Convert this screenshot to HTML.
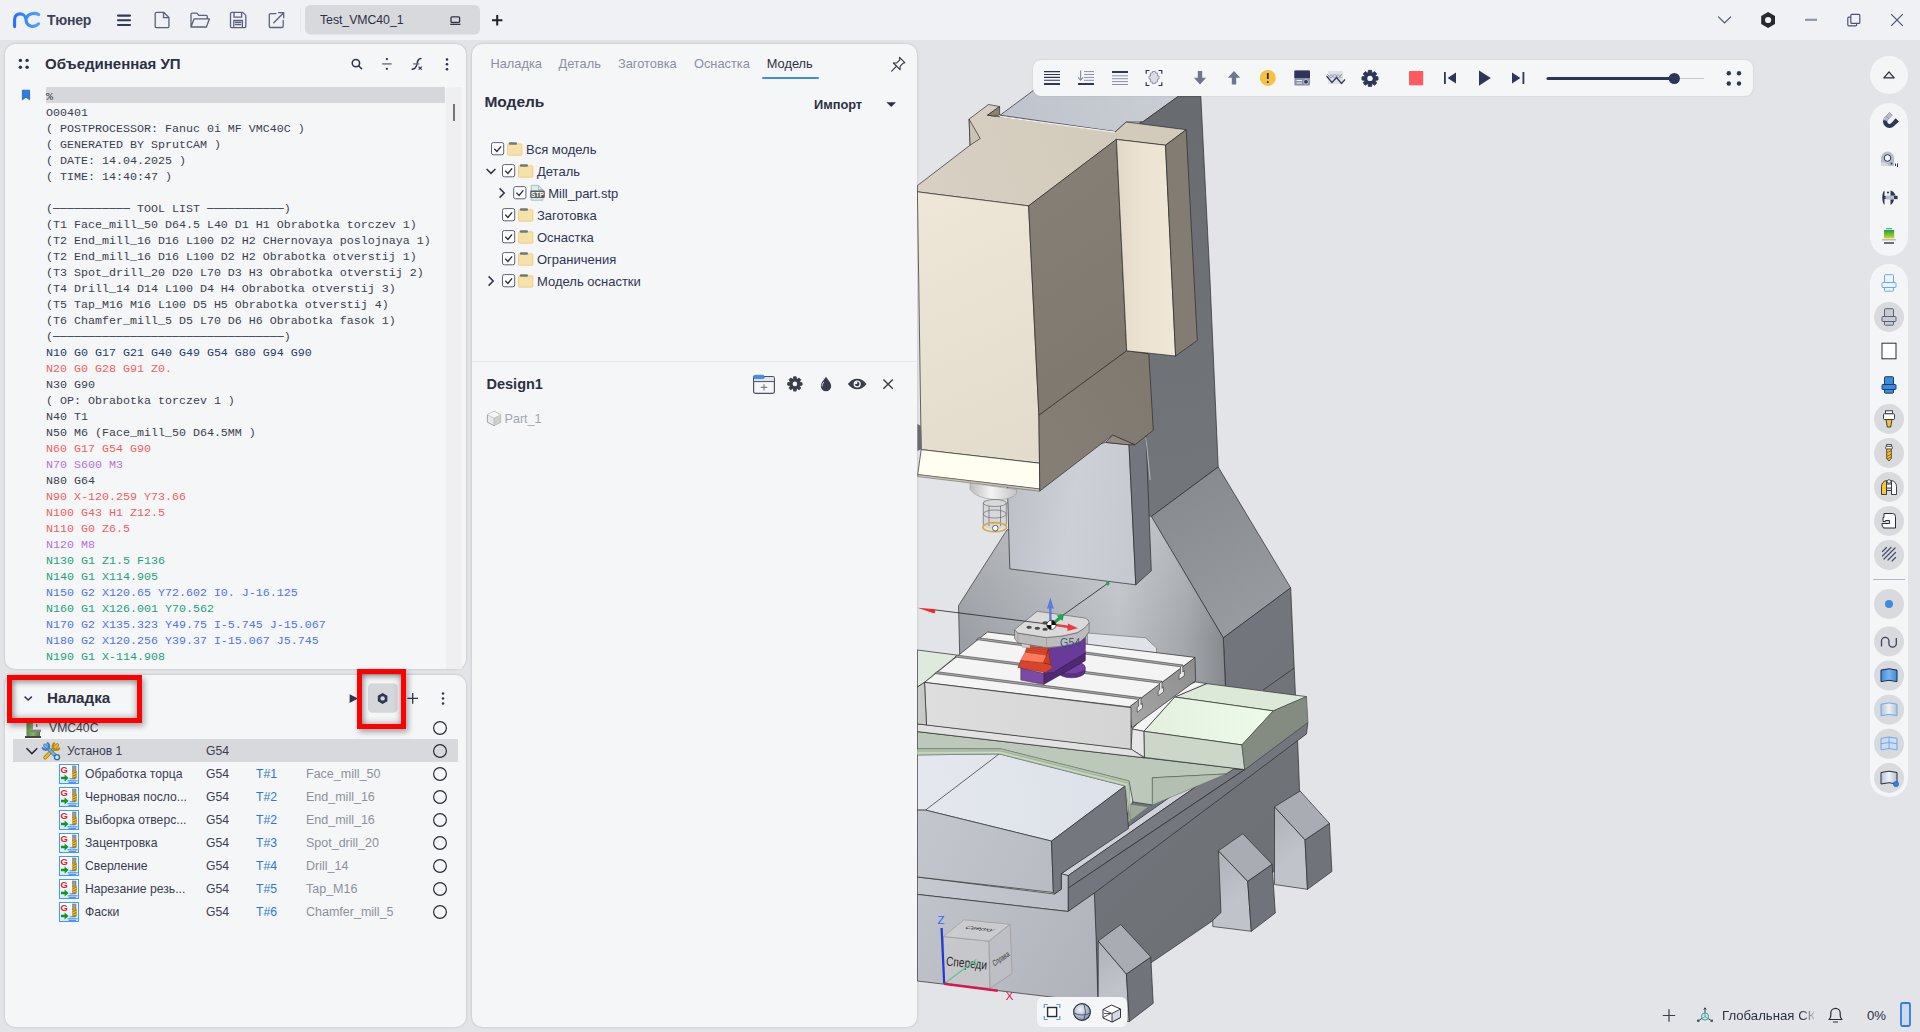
<!DOCTYPE html>
<html lang="ru">
<head>
<meta charset="utf-8">
<title>Тюнер</title>
<style>
*{box-sizing:border-box;margin:0;padding:0}
html,body{width:1920px;height:1032px;overflow:hidden}
body{background:#e3e4e8;font-family:"Liberation Sans",sans-serif;color:#2b3044;position:relative;font-size:13px}
.abs{position:absolute}
#topbar{position:absolute;left:0;top:0;width:1920px;height:40px;background:#f0f1f5}
.panel{position:absolute;background:#f5f6f8;border-radius:10px;box-shadow:0 0 2.5px rgba(0,0,0,.2)}
#p1{left:5px;top:44.4px;width:461px;height:625px}
#p2{left:5px;top:675px;width:461px;height:352px}
#p3{left:472px;top:44.4px;width:445px;height:982.6px}
#view{position:absolute;left:917px;top:40px;width:1003px;height:992px;overflow:hidden}
.t{position:absolute;white-space:pre;line-height:1}
#code{position:absolute;left:46px;top:88.5px;font-family:"Liberation Mono",monospace;font-size:11.67px;line-height:16px;color:#3a3f4f}
#code div{height:16px;white-space:pre}
.c0{color:#3a3f4f}.cb{color:#1f3a6b}.cr{color:#f0605f}.cp{color:#b86fe0}.cg{color:#1aa37a}.cu{color:#4f74e3}
</style>
</head>
<body>
<div id="topbar"></div>
<div class="panel" id="p1"></div>
<div class="panel" id="p2"></div>
<div class="panel" id="p3"></div>
<div id="view"></div>

<svg class="abs" style="left:0;top:0" width="1920" height="40" viewBox="0 0 1920 40" fill="none">
<defs><linearGradient id="lg" x1="13" y1="0" x2="40" y2="0" gradientUnits="userSpaceOnUse"><stop offset="0" stop-color="#2a6cf5"/><stop offset="1" stop-color="#49a8ff"/></linearGradient></defs>
<path d="M14.6 26.6V19.4C14.6 12 25.4 12 26 19.6C26.6 27.6 35 27.8 38.6 23.8" stroke="url(#lg)" stroke-width="3.1" stroke-linecap="round"/><path d="M26.6 17.6C28.2 13.6 34.4 12.200 38.800 14.600" stroke="url(#lg)" stroke-width="3.1" stroke-linecap="round"/>
<g stroke="#333b50" stroke-width="2.1" stroke-linecap="round"><path d="M118 15.6h12M118 20.3h12M118 25h12"/></g>
<g stroke="#5a627a" stroke-width="1.3" stroke-linejoin="round" stroke-linecap="round">
<path d="M156.5 12.3h7.2l5.2 5.2v8.9a1.3 1.3 0 0 1-1.3 1.3h-11.1a1.3 1.3 0 0 1-1.3-1.3v-12.8a1.3 1.3 0 0 1 1.3-1.3zM163.5 12.5v5.2h5.2"/>
<path d="M191 26.5v-12.2a1.2 1.2 0 0 1 1.2-1.2h4.6l2 2.2h7.3a1.2 1.2 0 0 1 1.2 1.2v2.3M191 27l3.1-8.2h15.3l-3 8.2z"/>
<path d="M231.8 12.4h11l3 3v11a1.3 1.3 0 0 1-1.3 1.3h-12.7a1.3 1.3 0 0 1-1.3-1.3v-12.7a1.3 1.3 0 0 1 1.3-1.3zM234 12.6v4.6h7.6v-4.6M233.8 27.5v-7h8.6v7M235.5 22.5h5.2M235.5 24.6h5.2"/>
<path d="M276 13.6h-5.5a1.2 1.2 0 0 0-1.2 1.2v11.5a1.2 1.2 0 0 0 1.2 1.2h11.5a1.2 1.2 0 0 0 1.2-1.2v-5.8M273.8 22.8l9.6-9.8M278.5 12.6h5.2v5.2"/>
</g>
<path d="M300.5 8v24" stroke="#e6e7eb" stroke-width="1"/>
<rect x="305" y="5" width="175" height="29.6" rx="5.5" fill="#d8d9dc"/>
<g stroke="#2e3240" stroke-width="1.3"><rect x="451" y="16.8" width="8.6" height="5.6" rx="1"/><path d="M450.2 24.3h10.2"/></g>
<path d="M492 20.2h10.4M497.2 15v10.4" stroke="#1f2228" stroke-width="2"/>
<path d="M1718.2 16.6l6.4 6.3 6.4-6.3" stroke="#4a5470" stroke-width="1.2"/>
<path d="M1768.1 11.9l6.9 4v8.1l-6.9 4l-6.9-4v-8.1z" fill="#27292e"/><circle cx="1768.1" cy="20" r="3.1" fill="#f0f1f5"/>
<path d="M1805 19.8h12" stroke="#8d95a8" stroke-width="2.2"/>
<g stroke="#4a5470" stroke-width="1.2"><rect x="1850.8" y="14.4" width="9" height="9" rx="1"/><path d="M1850.8 17.2h-2a1 1 0 0 0-1 1v6.6a1 1 0 0 0 1 1h6.8a1 1 0 0 0 1-1v-1.4"/></g>
<path d="M1891.2 14.2l11.6 11.6M1902.8 14.2l-11.6 11.6" stroke="#4a5470" stroke-width="1.2"/>
</svg>
<div class="t" style="left:47px;top:13px;font-size:14px;font-weight:bold;color:#3a4256;letter-spacing:-0.2px">Тюнер</div>
<div class="t" style="left:320px;top:13.5px;font-size:12.3px;color:#2b3044;letter-spacing:-0.05px">Test_VMC40_1</div>

<div class="abs" style="left:46px;top:87px;width:399px;height:16px;background:#d6d7db"></div>
<div class="abs" style="left:446px;top:87px;width:16px;height:582px;background:#efeff1"></div>
<div class="abs" style="left:453px;top:104px;width:2px;height:17px;background:#70737c"></div>
<div id="code">
<div class="c0">%</div>
<div class="c0">O00401</div>
<div class="c0">( POSTPROCESSOR: Fanuc 0i MF VMC40C )</div>
<div class="c0">( GENERATED BY SprutCAM )</div>
<div class="c0">( DATE: 14.04.2025 )</div>
<div class="c0">( TIME: 14:40:47 )</div>
<div class="c0"></div>
<div class="c0">(─────────── TOOL LIST ───────────)</div>
<div class="c0">(T1 Face_mill_50 D64.5 L40 D1 H1 Obrabotka torczev 1)</div>
<div class="c0">(T2 End_mill_16 D16 L100 D2 H2 CHernovaya poslojnaya 1)</div>
<div class="c0">(T2 End_mill_16 D16 L100 D2 H2 Obrabotka otverstij 1)</div>
<div class="c0">(T3 Spot_drill_20 D20 L70 D3 H3 Obrabotka otverstij 2)</div>
<div class="c0">(T4 Drill_14 D14 L100 D4 H4 Obrabotka otverstij 3)</div>
<div class="c0">(T5 Tap_M16 M16 L100 D5 H5 Obrabotka otverstij 4)</div>
<div class="c0">(T6 Chamfer_mill_5 D5 L70 D6 H6 Obrabotka fasok 1)</div>
<div class="c0">(─────────────────────────────────)</div>
<div class="cb">N10 G0 G17 G21 G40 G49 G54 G80 G94 G90</div>
<div class="cr">N20 G0 G28 G91 Z0.</div>
<div class="c0">N30 G90</div>
<div class="c0">( OP: Obrabotka torczev 1 )</div>
<div class="c0">N40 T1</div>
<div class="c0">N50 M6 (Face_mill_50 D64.5MM )</div>
<div class="cr">N60 G17 G54 G90</div>
<div class="cp">N70 S600 M3</div>
<div class="c0">N80 G64</div>
<div class="cr">N90 X-120.259 Y73.66</div>
<div class="cr">N100 G43 H1 Z12.5</div>
<div class="cr">N110 G0 Z6.5</div>
<div class="cp">N120 M8</div>
<div class="cg">N130 G1 Z1.5 F136</div>
<div class="cg">N140 G1 X114.905</div>
<div class="cu">N150 G2 X120.65 Y72.602 I0. J-16.125</div>
<div class="cg">N160 G1 X126.001 Y70.562</div>
<div class="cu">N170 G2 X135.323 Y49.75 I-5.745 J-15.067</div>
<div class="cu">N180 G2 X120.256 Y39.37 I-15.067 J5.745</div>
<div class="cg">N190 G1 X-114.908</div>
</div>

<svg class="abs" style="left:0;top:44px" width="470" height="66" viewBox="0 44 470 66" fill="none">
<g fill="#2b3350"><circle cx="20.4" cy="60.4" r="1.7"/><circle cx="27.1" cy="60.4" r="1.7"/><circle cx="20.4" cy="67.2" r="1.7"/><circle cx="27.1" cy="67.2" r="1.7"/></g>
<circle cx="355.9" cy="63.1" r="3.7" stroke="#2b3350" stroke-width="1.5"/><path d="M358.7 65.9l2.9 2.9" stroke="#2b3350" stroke-width="1.5" stroke-linecap="round"/>
<circle cx="386.9" cy="59.1" r="1.15" fill="#2b3350"/><circle cx="386.9" cy="68.8" r="1.15" fill="#2b3350"/><path d="M382.2 63.9h9.4" stroke="#6d758c" stroke-width="1.5"/>
<path d="M420.9 58.6c-2.6 0.2-3.3 1.9-3.9 5.2c-0.6 3.3-1.6 5-4.8 5.4" stroke="#2b3350" stroke-width="1.5" stroke-linecap="round"/><path d="M413.2 63.9h6.2" stroke="#6d758c" stroke-width="1.4"/><path d="M418.6 66.6l3.2 3M421.8 66.6l-3.2 3" stroke="#2b3350" stroke-width="1.2"/>
<g fill="#2b3350"><circle cx="447" cy="59.5" r="1.3"/><circle cx="447" cy="64.3" r="1.3"/><circle cx="447" cy="69.2" r="1.3"/></g>
<path d="M22.4 90.2h7.2v9.6l-3.6-2.6l-3.6 2.6z" fill="#2f7de1" stroke="#1c5fc0" stroke-width="0.8" stroke-linejoin="round"/>
</svg>
<div class="t" style="left:45px;top:56px;font-size:15px;font-weight:bold;color:#2b3044">Объединенная УП</div>

<div class="abs" style="left:5px;top:719px;width:461px;height:305px;overflow:hidden">
<div class="abs" style="left:8px;top:20px;width:445px;height:23px;background:#d8d9dc"></div>
<div class="t" style="left:44px;top:3px;font-size:12.2px;color:#3a4053">VMC40C</div>
<div class="t" style="left:62px;top:26.4px;font-size:12.2px;color:#3a4053">Установ 1</div>
<div class="t" style="left:201px;top:26.4px;font-size:12.2px;color:#3a4053">G54</div>
<div class="t" style="left:80px;top:49.4px;font-size:12.2px;color:#3a4053">Обработка торца</div>
<div class="t" style="left:201px;top:49.4px;font-size:12.2px;color:#3a4053">G54</div>
<div class="t" style="left:251px;top:49.4px;font-size:12.2px;color:#2a78d6">T#1</div>
<div class="t" style="left:301px;top:49.4px;font-size:12.5px;color:#8d919c">Face_mill_50</div>
<div class="t" style="left:80px;top:72.4px;font-size:12.2px;color:#3a4053">Черновая посло...</div>
<div class="t" style="left:201px;top:72.4px;font-size:12.2px;color:#3a4053">G54</div>
<div class="t" style="left:251px;top:72.4px;font-size:12.2px;color:#2a78d6">T#2</div>
<div class="t" style="left:301px;top:72.4px;font-size:12.5px;color:#8d919c">End_mill_16</div>
<div class="t" style="left:80px;top:95.4px;font-size:12.2px;color:#3a4053">Выборка отверс...</div>
<div class="t" style="left:201px;top:95.4px;font-size:12.2px;color:#3a4053">G54</div>
<div class="t" style="left:251px;top:95.4px;font-size:12.2px;color:#2a78d6">T#2</div>
<div class="t" style="left:301px;top:95.4px;font-size:12.5px;color:#8d919c">End_mill_16</div>
<div class="t" style="left:80px;top:118.4px;font-size:12.2px;color:#3a4053">Зацентровка</div>
<div class="t" style="left:201px;top:118.4px;font-size:12.2px;color:#3a4053">G54</div>
<div class="t" style="left:251px;top:118.4px;font-size:12.2px;color:#2a78d6">T#3</div>
<div class="t" style="left:301px;top:118.4px;font-size:12.5px;color:#8d919c">Spot_drill_20</div>
<div class="t" style="left:80px;top:141.4px;font-size:12.2px;color:#3a4053">Сверление</div>
<div class="t" style="left:201px;top:141.4px;font-size:12.2px;color:#3a4053">G54</div>
<div class="t" style="left:251px;top:141.4px;font-size:12.2px;color:#2a78d6">T#4</div>
<div class="t" style="left:301px;top:141.4px;font-size:12.5px;color:#8d919c">Drill_14</div>
<div class="t" style="left:80px;top:164.4px;font-size:12.2px;color:#3a4053">Нарезание резь...</div>
<div class="t" style="left:201px;top:164.4px;font-size:12.2px;color:#3a4053">G54</div>
<div class="t" style="left:251px;top:164.4px;font-size:12.2px;color:#2a78d6">T#5</div>
<div class="t" style="left:301px;top:164.4px;font-size:12.5px;color:#8d919c">Tap_M16</div>
<div class="t" style="left:80px;top:187.4px;font-size:12.2px;color:#3a4053">Фаски</div>
<div class="t" style="left:201px;top:187.4px;font-size:12.2px;color:#3a4053">G54</div>
<div class="t" style="left:251px;top:187.4px;font-size:12.2px;color:#2a78d6">T#6</div>
<div class="t" style="left:301px;top:187.4px;font-size:12.5px;color:#8d919c">Chamfer_mill_5</div>
<svg class="abs" style="left:0;top:0" width="461" height="305" viewBox="5 719 461 305" fill="none">
<circle cx="440" cy="728" r="6.4" stroke="#2a2d38" stroke-width="1.2"/>
<circle cx="440" cy="751" r="6.4" stroke="#2a2d38" stroke-width="1.2"/>
<circle cx="440" cy="774" r="6.4" stroke="#2a2d38" stroke-width="1.2"/>
<circle cx="440" cy="797" r="6.4" stroke="#2a2d38" stroke-width="1.2"/>
<circle cx="440" cy="820" r="6.4" stroke="#2a2d38" stroke-width="1.2"/>
<circle cx="440" cy="843" r="6.4" stroke="#2a2d38" stroke-width="1.2"/>
<circle cx="440" cy="866" r="6.4" stroke="#2a2d38" stroke-width="1.2"/>
<circle cx="440" cy="889" r="6.4" stroke="#2a2d38" stroke-width="1.2"/>
<circle cx="440" cy="912" r="6.4" stroke="#2a2d38" stroke-width="1.2"/>
<defs><linearGradient id="gv" x1="0" y1="0" x2="1" y2="0"><stop offset="0" stop-color="#5c8c42"/><stop offset=".5" stop-color="#86b36a"/><stop offset="1" stop-color="#4f7d38"/></linearGradient><linearGradient id="gi" x1="0" y1="0" x2="0" y2="1"><stop offset="0" stop-color="#ffffff"/><stop offset="1" stop-color="#d8eaff"/></linearGradient></defs>
<path d="M26.5 720h6.5v9.5h-2v2.5h9v4h-13.5z" fill="url(#gv)"/><rect x="31" y="729.6" width="10" height="2.4" fill="#8a7d90"/><rect x="25" y="736" width="16" height="2" fill="#444"/><rect x="36" y="724" width="1.4" height="3" fill="#777"/>
<path d="M26.5 748.2l5.4 5.4l5.4-5.4" stroke="#2a2d38" stroke-width="1.6"/>
<g stroke-linecap="round"><path d="M57.2 745.2L45.2 757.6" stroke="#8a6a00" stroke-width="3.6"/><path d="M57.2 745.2L45.2 757.6" stroke="#f2b90c" stroke-width="2.4"/><path d="M54.2 743.4a3.6 3.6 0 1 0 5 5" stroke="#b8890a" stroke-width="2.2" fill="none"/><path d="M45 745.4L56.6 757" stroke="#2f6aa8" stroke-width="3.6"/><path d="M45 745.4L56.6 757" stroke="#6fb0ee" stroke-width="2.4"/><path d="M47.6 743.2a3.6 3.6 0 1 1-5 5" stroke="#3f7fc2" stroke-width="2.2" fill="none"/><circle cx="57" cy="757.2" r="2.5" fill="#cfe4fa" stroke="#2f6aa8" stroke-width="1.3"/></g>
<g transform="translate(59 764)"><rect x="0.5" y="0.5" width="19" height="19" fill="url(#gi)" stroke="#3d9bff"/><rect x="13.6" y="2" width="3.4" height="5.4" fill="#9a9a9a" stroke="#666" stroke-width=".5"/><rect x="13.6" y="7.2" width="3.8" height="7.4" fill="#f2b90c" stroke="#a87c00" stroke-width=".5"/><path d="M13.8 9.6l3.4-1.6M13.8 12.2l3.4-1.6M13.8 14.4l3.4-1.4" stroke="#8a6500" stroke-width=".8"/><path d="M2 12.8h3.6v-2.2l4 3.4l-4 3.4v-2.2H2z" fill="#119a11"/><path d="M10.6 14.8h6M8.6 16.8h10M9.6 18.4h7.4" stroke="#2a7fe8" stroke-width=".9"/><text x="1.6" y="9.2" font-family="Liberation Sans,sans-serif" font-weight="bold" font-size="9.5" fill="#f01818">G</text></g>
<g transform="translate(59 787)"><rect x="0.5" y="0.5" width="19" height="19" fill="url(#gi)" stroke="#3d9bff"/><rect x="13.6" y="2" width="3.4" height="5.4" fill="#9a9a9a" stroke="#666" stroke-width=".5"/><rect x="13.6" y="7.2" width="3.8" height="7.4" fill="#f2b90c" stroke="#a87c00" stroke-width=".5"/><path d="M13.8 9.6l3.4-1.6M13.8 12.2l3.4-1.6M13.8 14.4l3.4-1.4" stroke="#8a6500" stroke-width=".8"/><path d="M2 12.8h3.6v-2.2l4 3.4l-4 3.4v-2.2H2z" fill="#119a11"/><path d="M10.6 14.8h6M8.6 16.8h10M9.6 18.4h7.4" stroke="#2a7fe8" stroke-width=".9"/><text x="1.6" y="9.2" font-family="Liberation Sans,sans-serif" font-weight="bold" font-size="9.5" fill="#f01818">G</text></g>
<g transform="translate(59 810)"><rect x="0.5" y="0.5" width="19" height="19" fill="url(#gi)" stroke="#3d9bff"/><rect x="13.6" y="2" width="3.4" height="5.4" fill="#9a9a9a" stroke="#666" stroke-width=".5"/><rect x="13.6" y="7.2" width="3.8" height="7.4" fill="#f2b90c" stroke="#a87c00" stroke-width=".5"/><path d="M13.8 9.6l3.4-1.6M13.8 12.2l3.4-1.6M13.8 14.4l3.4-1.4" stroke="#8a6500" stroke-width=".8"/><path d="M2 12.8h3.6v-2.2l4 3.4l-4 3.4v-2.2H2z" fill="#119a11"/><path d="M10.6 14.8h6M8.6 16.8h10M9.6 18.4h7.4" stroke="#2a7fe8" stroke-width=".9"/><text x="1.6" y="9.2" font-family="Liberation Sans,sans-serif" font-weight="bold" font-size="9.5" fill="#f01818">G</text></g>
<g transform="translate(59 833)"><rect x="0.5" y="0.5" width="19" height="19" fill="url(#gi)" stroke="#3d9bff"/><rect x="13.6" y="2" width="3.4" height="5.4" fill="#9a9a9a" stroke="#666" stroke-width=".5"/><rect x="13.6" y="7.2" width="3.8" height="7.4" fill="#f2b90c" stroke="#a87c00" stroke-width=".5"/><path d="M13.8 9.6l3.4-1.6M13.8 12.2l3.4-1.6M13.8 14.4l3.4-1.4" stroke="#8a6500" stroke-width=".8"/><path d="M2 12.8h3.6v-2.2l4 3.4l-4 3.4v-2.2H2z" fill="#119a11"/><path d="M10.6 14.8h6M8.6 16.8h10M9.6 18.4h7.4" stroke="#2a7fe8" stroke-width=".9"/><text x="1.6" y="9.2" font-family="Liberation Sans,sans-serif" font-weight="bold" font-size="9.5" fill="#f01818">G</text></g>
<g transform="translate(59 856)"><rect x="0.5" y="0.5" width="19" height="19" fill="url(#gi)" stroke="#3d9bff"/><rect x="13.6" y="2" width="3.4" height="5.4" fill="#9a9a9a" stroke="#666" stroke-width=".5"/><rect x="13.6" y="7.2" width="3.8" height="7.4" fill="#f2b90c" stroke="#a87c00" stroke-width=".5"/><path d="M13.8 9.6l3.4-1.6M13.8 12.2l3.4-1.6M13.8 14.4l3.4-1.4" stroke="#8a6500" stroke-width=".8"/><path d="M2 12.8h3.6v-2.2l4 3.4l-4 3.4v-2.2H2z" fill="#119a11"/><path d="M10.6 14.8h6M8.6 16.8h10M9.6 18.4h7.4" stroke="#2a7fe8" stroke-width=".9"/><text x="1.6" y="9.2" font-family="Liberation Sans,sans-serif" font-weight="bold" font-size="9.5" fill="#f01818">G</text></g>
<g transform="translate(59 879)"><rect x="0.5" y="0.5" width="19" height="19" fill="url(#gi)" stroke="#3d9bff"/><rect x="13.6" y="2" width="3.4" height="5.4" fill="#9a9a9a" stroke="#666" stroke-width=".5"/><rect x="13.6" y="7.2" width="3.8" height="7.4" fill="#f2b90c" stroke="#a87c00" stroke-width=".5"/><path d="M13.8 9.6l3.4-1.6M13.8 12.2l3.4-1.6M13.8 14.4l3.4-1.4" stroke="#8a6500" stroke-width=".8"/><path d="M2 12.8h3.6v-2.2l4 3.4l-4 3.4v-2.2H2z" fill="#119a11"/><path d="M10.6 14.8h6M8.6 16.8h10M9.6 18.4h7.4" stroke="#2a7fe8" stroke-width=".9"/><text x="1.6" y="9.2" font-family="Liberation Sans,sans-serif" font-weight="bold" font-size="9.5" fill="#f01818">G</text></g>
<g transform="translate(59 902)"><rect x="0.5" y="0.5" width="19" height="19" fill="url(#gi)" stroke="#3d9bff"/><rect x="13.6" y="2" width="3.4" height="5.4" fill="#9a9a9a" stroke="#666" stroke-width=".5"/><rect x="13.6" y="7.2" width="3.8" height="7.4" fill="#f2b90c" stroke="#a87c00" stroke-width=".5"/><path d="M13.8 9.6l3.4-1.6M13.8 12.2l3.4-1.6M13.8 14.4l3.4-1.4" stroke="#8a6500" stroke-width=".8"/><path d="M2 12.8h3.6v-2.2l4 3.4l-4 3.4v-2.2H2z" fill="#119a11"/><path d="M10.6 14.8h6M8.6 16.8h10M9.6 18.4h7.4" stroke="#2a7fe8" stroke-width=".9"/><text x="1.6" y="9.2" font-family="Liberation Sans,sans-serif" font-weight="bold" font-size="9.5" fill="#f01818">G</text></g>
</svg>
</div>
<svg class="abs" style="left:5px;top:675px" width="461" height="50" viewBox="5 675 461 50" fill="none"><path d="M24.6 696.6l3.6 3.4l3.6-3.4" stroke="#2d3750" stroke-width="1.5"/><path d="M349.6 694.2l8.4 4.4l-8.4 4.4z" fill="#2d3750"/><rect x="368" y="683.2" width="29.6" height="29.6" rx="4.5" fill="#d6d7da"/><path d="M382.6 692.9l4.8 2.8v5.5l-4.8 2.8l-4.8-2.8v-5.5z" fill="#2d3750"/><circle cx="382.6" cy="698.4" r="2.2" fill="#d6d7da"/><path d="M407.4 698.4h10.6M412.7 693.1v10.6" stroke="#2d3750" stroke-width="1.3"/><g fill="#2d3750"><circle cx="443" cy="693.5" r="1.25"/><circle cx="443" cy="698.5" r="1.25"/><circle cx="443" cy="703.5" r="1.25"/></g></svg>
<div class="t" style="left:47px;top:690px;font-size:15.2px;font-weight:bold;color:#2b3044">Наладка</div>
<div class="abs" style="left:7px;top:675px;width:135px;height:48px;border:5px solid #fe0000;box-shadow:2px 3px 6px rgba(0,0,0,.35), inset 0 0 7px rgba(0,0,0,.38), inset 2px 3px 5px rgba(0,0,0,.2)"></div>
<div class="abs" style="left:357px;top:669px;width:49px;height:60px;border:5px solid #fe0000;box-shadow:2px 3px 6px rgba(0,0,0,.35), inset 0 0 7px rgba(0,0,0,.38), inset 2px 3px 5px rgba(0,0,0,.2)"></div>

<div class="t" style="left:490.5px;top:58.26px;font-size:12.8px;color:#8a8fa3;">Наладка</div>
<div class="t" style="left:558.5px;top:58.26px;font-size:12.8px;color:#8a8fa3;">Деталь</div>
<div class="t" style="left:618px;top:58.26px;font-size:12.8px;color:#8a8fa3;">Заготовка</div>
<div class="t" style="left:694px;top:58.26px;font-size:12.8px;color:#8a8fa3;">Оснастка</div>
<div class="t" style="left:766.8px;top:58.26px;font-size:12.8px;color:#2b3044;">Модель</div>
<div class="abs" style="left:762px;top:77px;width:57px;height:2px;background:#3a8ee6;border-radius:1px"></div>
<div class="t" style="left:484.4px;top:93.88px;font-size:15.5px;font-weight:bold;color:#2b3044;">Модель</div>
<div class="t" style="left:814px;top:98.66px;font-size:12.8px;font-weight:bold;color:#2b3044;">Импорт</div>
<div class="t" style="left:526px;top:142.80px;font-size:13px;color:#2f3554;">Вся модель</div>
<div class="t" style="left:537px;top:164.80px;font-size:13px;color:#2f3554;">Деталь</div>
<div class="t" style="left:548.2px;top:186.80px;font-size:13px;color:#2f3554;">Mill_part.stp</div>
<div class="t" style="left:537px;top:208.80px;font-size:13px;color:#2f3554;">Заготовка</div>
<div class="t" style="left:537px;top:230.80px;font-size:13px;color:#2f3554;">Оснастка</div>
<div class="t" style="left:537px;top:252.80px;font-size:13px;color:#2f3554;">Ограничения</div>
<div class="t" style="left:537px;top:274.80px;font-size:13px;color:#2f3554;">Модель оснастки</div>
<svg class="abs" style="left:472px;top:44px" width="445" height="400" viewBox="472 44 445 400" fill="none">
<g stroke="#3a3d4a" stroke-width="1.2" stroke-linejoin="round" stroke-linecap="round"><path d="M899.6 57.4l5.2 5.2l-1.6 0.6l-3 3l-0.2 3.4l-6.6-6.6l3.4-0.2l3-3z"/><path d="M896.6 66.2l-5 5"/></g>
<path d="M886.4 102.2h9.6l-4.8 4.8z" fill="#2b3044"/>
<rect x="491.5" y="142.6" width="12.2" height="12.2" rx="1.8" fill="#fff" stroke="#5d627e" stroke-width="1"/><path d="M494.3 148.8l2.6 2.7l4.2-5.2" stroke="#2a2d3a" stroke-width="1.3"/>
<path d="M508.4 143.8h12.6a0.8 0.8 0 0 1 0.8 0.8v9.8a0.8 0.8 0 0 1-0.8 0.8h-12.6a0.8 0.8 0 0 1-0.8-0.8v-9.8a0.8 0.8 0 0 1 0.8-0.8z" fill="#f7e1ab" stroke="#ecc779" stroke-width=".8"/><rect x="508.8" y="142.2" width="8.2" height="2.6" rx="1.2" fill="#6f7a74"/>
<rect x="502.5" y="164.6" width="12.2" height="12.2" rx="1.8" fill="#fff" stroke="#5d627e" stroke-width="1"/><path d="M505.3 170.8l2.6 2.7l4.2-5.2" stroke="#2a2d3a" stroke-width="1.3"/>
<path d="M519.4 165.8h12.6a0.8 0.8 0 0 1 0.8 0.8v9.8a0.8 0.8 0 0 1-0.8 0.8h-12.6a0.8 0.8 0 0 1-0.8-0.8v-9.8a0.8 0.8 0 0 1 0.8-0.8z" fill="#f7e1ab" stroke="#ecc779" stroke-width=".8"/><rect x="519.8" y="164.2" width="8.2" height="2.6" rx="1.2" fill="#6f7a74"/>
<path d="M486.6 169l4.4 4.4l4.4-4.4" stroke="#2f3347" stroke-width="1.5"/>
<rect x="513.7" y="186.6" width="12.2" height="12.2" rx="1.8" fill="#fff" stroke="#5d627e" stroke-width="1"/><path d="M516.5 192.8l2.6 2.7l4.2-5.2" stroke="#2a2d3a" stroke-width="1.3"/>
<path d="M531.2 185.4h7.4l4.2 4.2v10.6h-11.6z" fill="#d9ecee" stroke="#9db4b8" stroke-width=".8"/><path d="M538.6 185.4v4.2h4.2" stroke="#9db4b8" stroke-width=".8"/><rect x="530.2" y="190.6" width="14.6" height="7.4" rx="1.2" fill="#5a5d60"/><text x="531.1" y="196.8" font-family="Liberation Sans,sans-serif" font-weight="bold" font-size="7" fill="#fff" textLength="12.8" lengthAdjust="spacingAndGlyphs">STP</text>
<path d="M499.6 188.4l4.6 4.6l-4.6 4.6" stroke="#2f3347" stroke-width="1.5"/>
<rect x="502.5" y="208.6" width="12.2" height="12.2" rx="1.8" fill="#fff" stroke="#5d627e" stroke-width="1"/><path d="M505.3 214.8l2.6 2.7l4.2-5.2" stroke="#2a2d3a" stroke-width="1.3"/>
<path d="M519.4 209.8h12.6a0.8 0.8 0 0 1 0.8 0.8v9.8a0.8 0.8 0 0 1-0.8 0.8h-12.6a0.8 0.8 0 0 1-0.8-0.8v-9.8a0.8 0.8 0 0 1 0.8-0.8z" fill="#f7e1ab" stroke="#ecc779" stroke-width=".8"/><rect x="519.8" y="208.2" width="8.2" height="2.6" rx="1.2" fill="#6f7a74"/>
<rect x="502.5" y="230.6" width="12.2" height="12.2" rx="1.8" fill="#fff" stroke="#5d627e" stroke-width="1"/><path d="M505.3 236.8l2.6 2.7l4.2-5.2" stroke="#2a2d3a" stroke-width="1.3"/>
<path d="M519.4 231.8h12.6a0.8 0.8 0 0 1 0.8 0.8v9.8a0.8 0.8 0 0 1-0.8 0.8h-12.6a0.8 0.8 0 0 1-0.8-0.8v-9.8a0.8 0.8 0 0 1 0.8-0.8z" fill="#f7e1ab" stroke="#ecc779" stroke-width=".8"/><rect x="519.8" y="230.2" width="8.2" height="2.6" rx="1.2" fill="#6f7a74"/>
<rect x="502.5" y="252.6" width="12.2" height="12.2" rx="1.8" fill="#fff" stroke="#5d627e" stroke-width="1"/><path d="M505.3 258.8l2.6 2.7l4.2-5.2" stroke="#2a2d3a" stroke-width="1.3"/>
<path d="M519.4 253.8h12.6a0.8 0.8 0 0 1 0.8 0.8v9.8a0.8 0.8 0 0 1-0.8 0.8h-12.6a0.8 0.8 0 0 1-0.8-0.8v-9.8a0.8 0.8 0 0 1 0.8-0.8z" fill="#f7e1ab" stroke="#ecc779" stroke-width=".8"/><rect x="519.8" y="252.2" width="8.2" height="2.6" rx="1.2" fill="#6f7a74"/>
<rect x="502.5" y="274.6" width="12.2" height="12.2" rx="1.8" fill="#fff" stroke="#5d627e" stroke-width="1"/><path d="M505.3 280.8l2.6 2.7l4.2-5.2" stroke="#2a2d3a" stroke-width="1.3"/>
<path d="M519.4 275.8h12.6a0.8 0.8 0 0 1 0.8 0.8v9.8a0.8 0.8 0 0 1-0.8 0.8h-12.6a0.8 0.8 0 0 1-0.8-0.8v-9.8a0.8 0.8 0 0 1 0.8-0.8z" fill="#f7e1ab" stroke="#ecc779" stroke-width=".8"/><rect x="519.8" y="274.2" width="8.2" height="2.6" rx="1.2" fill="#6f7a74"/>
<path d="M488.6 276.4l4.6 4.6l-4.6 4.6" stroke="#2f3347" stroke-width="1.5"/>
<path d="M472 361.5h445" stroke="#e8e9ed" stroke-width="1.2"/>
<rect x="753.6" y="376.6" width="20.8" height="16.8" rx="1.8" fill="#f5f6f8" stroke="#4a5068" stroke-width="1.2"/><path d="M754.2 377.2h19.6v4.2h-19.6z" fill="#e2e5ee"/><path d="M753.6 381.6h20.8" stroke="#4a5068" stroke-width="1"/><rect x="753.4" y="375.2" width="11" height="3.4" rx="1.7" fill="#3d8fe8" stroke="#2a6fc4" stroke-width=".6"/><path d="M760.8 387.4h6.4M764 384.2v6.4" stroke="#7b7f8c" stroke-width="1.2"/>
<path d="M793.66 376.71 L796.14 376.71 L796.50 378.74 L797.42 379.12 L799.11 377.94 L800.86 379.69 L799.68 381.38 L800.06 382.30 L802.09 382.66 L802.09 385.14 L800.06 385.50 L799.68 386.42 L800.86 388.11 L799.11 389.86 L797.42 388.68 L796.50 389.06 L796.14 391.09 L793.66 391.09 L793.30 389.06 L792.38 388.68 L790.69 389.86 L788.94 388.11 L790.12 386.42 L789.74 385.50 L787.71 385.14 L787.71 382.66 L789.74 382.30 L790.12 381.38 L788.94 379.69 L790.69 377.94 L792.38 379.12 L793.30 378.74z" fill="#3a3d4a" stroke="#3a3d4a" stroke-width=".8" stroke-linejoin="round"/><circle cx="794.9" cy="383.9" r="2.3" fill="#f5f6f8"/>
<path d="M826 376.8c2.4 3.4 5.2 6.4 5.2 9.2a5.2 5.2 0 0 1-10.4 0c0-2.800 2.800-5.800 5.200-9.200z" fill="#3a3d4a"/><path d="M823.4 382.6c-0.9 1.400-1.300 2.400-1.300 3.400" stroke="#f5f6f8" stroke-width="1" stroke-linecap="round"/>
<path d="M847.9 384c2.600-3.600 5.800-5.300 9.300-5.300s6.700 1.700 9.300 5.300c-2.600 3.600-5.800 5.300-9.300 5.300s-6.700-1.700-9.300-5.300z" fill="#3a3d4a"/><circle cx="857.2" cy="384" r="3.6" fill="#f5f6f8"/><circle cx="857.2" cy="384" r="2.3" fill="#3a3d4a"/><path d="M857.2 384v-2.400a2.400 2.400 0 0 0-2.400 2.400z" fill="#f5f6f8"/>
<path d="M883.4 379.4l9.400 9.400M892.800 379.400l-9.400 9.400" stroke="#3a3d4a" stroke-width="1.4"/>
<path d="M494 411.4l6.600 3.400v7.400l-6.600 3.400l-6.600-3.400v-7.400z" fill="#e9e9e9" stroke="#9a9a9a" stroke-width=".9" stroke-linejoin="round"/><path d="M494 418.200l6.600-3.400v7.400l-6.600 3.400z" fill="#cfcfcf"/><path d="M487.400 414.800l6.600 3.400l6.600-3.400l-6.600-3.400z" fill="#f6f6f6"/><path d="M487.400 414.800l6.600 3.400l6.600-3.400M494 418.200v7.400" stroke="#aaa" stroke-width=".6"/>
</svg>
<div class="t" style="left:486.5px;top:376.83px;font-size:14.5px;font-weight:bold;color:#2b3044;">Design1</div>
<div class="t" style="left:504.5px;top:412.63px;font-size:12.6px;color:#a2a6b0;">Part_1</div>

<svg class="abs" style="left:917px;top:40px" width="1003" height="992" viewBox="917 40 1003 992"><defs><linearGradient id="cfl" gradientUnits="userSpaceOnUse" x1="958" y1="0" x2="1226" y2="0"><stop offset="0" stop-color="#9a9da3"/><stop offset=".2" stop-color="#a6a9af"/><stop offset=".6" stop-color="#bec1c6"/><stop offset=".85" stop-color="#a3a6ab"/><stop offset="1" stop-color="#85888d"/></linearGradient><linearGradient id="cfl2" gradientUnits="userSpaceOnUse" x1="0" y1="505" x2="0" y2="640"><stop offset="0" stop-color="#fff" stop-opacity=".22"/><stop offset="1" stop-color="#fff" stop-opacity="0"/></linearGradient><linearGradient id="sg1" gradientUnits="userSpaceOnUse" x1="1000" y1="110" x2="1180" y2="100"><stop offset="0" stop-color="#bfc3cb"/><stop offset="1" stop-color="#c9cdd4"/></linearGradient><linearGradient id="sg2" gradientUnits="userSpaceOnUse" x1="1150" y1="100" x2="1215" y2="470"><stop offset="0" stop-color="#686c71"/><stop offset="1" stop-color="#72767b"/></linearGradient><linearGradient id="sg3" gradientUnits="userSpaceOnUse" x1="1185" y1="480" x2="1260" y2="620"><stop offset="0" stop-color="#878a8f"/><stop offset="1" stop-color="#989ba0"/></linearGradient><linearGradient id="sg4" gradientUnits="userSpaceOnUse" x1="1100" y1="700" x2="1300" y2="900"><stop offset="0" stop-color="#74787e"/><stop offset="1" stop-color="#6c7075"/></linearGradient><linearGradient id="sg5" gradientUnits="userSpaceOnUse" x1="1007" y1="500" x2="1136" y2="520"><stop offset="0" stop-color="#bcc0c7"/><stop offset=".5" stop-color="#cdd0d6"/><stop offset="1" stop-color="#c6c9d0"/></linearGradient><linearGradient id="sg6" gradientUnits="userSpaceOnUse" x1="920" y1="190" x2="1120" y2="130"><stop offset="0" stop-color="#d8d1c3"/><stop offset="1" stop-color="#d2cabb"/></linearGradient><linearGradient id="sg7" gradientUnits="userSpaceOnUse" x1="920" y1="200" x2="1035" y2="450"><stop offset="0" stop-color="#eee6d7"/><stop offset="1" stop-color="#e3dbcc"/></linearGradient><linearGradient id="sg8" gradientUnits="userSpaceOnUse" x1="1030" y1="210" x2="1125" y2="350"><stop offset="0" stop-color="#847e75"/><stop offset="1" stop-color="#7f7970"/></linearGradient><linearGradient id="sg9" gradientUnits="userSpaceOnUse" x1="1040" y1="420" x2="1150" y2="360"><stop offset="0" stop-color="#847e75"/><stop offset="1" stop-color="#7f7970"/></linearGradient><linearGradient id="sg10" gradientUnits="userSpaceOnUse" x1="1118" y1="250" x2="1172" y2="250"><stop offset="0" stop-color="#e2d9c8"/><stop offset=".5" stop-color="#ede4d3"/><stop offset="1" stop-color="#eee6d6"/></linearGradient><linearGradient id="spn" x1="0" y1="0" x2="1" y2="0"><stop offset="0" stop-color="#bdbdbd"/><stop offset=".45" stop-color="#f4f4f4"/><stop offset="1" stop-color="#c4c4c4"/></linearGradient><linearGradient id="sg11" gradientUnits="userSpaceOnUse" x1="920" y1="880" x2="1068" y2="900"><stop offset="0" stop-color="#c6c9cf"/><stop offset="1" stop-color="#bcbfc5"/></linearGradient><linearGradient id="sg12" gradientUnits="userSpaceOnUse" x1="920" y1="900" x2="1090" y2="1000"><stop offset="0" stop-color="#c0c3c9"/><stop offset="1" stop-color="#b0b3b9"/></linearGradient><linearGradient id="sg13" gradientUnits="userSpaceOnUse" x1="920" y1="800" x2="1110" y2="780"><stop offset="0" stop-color="#e4e8ee"/><stop offset="1" stop-color="#dde1e9"/></linearGradient><linearGradient id="sg14" gradientUnits="userSpaceOnUse" x1="920" y1="820" x2="1050" y2="880"><stop offset="0" stop-color="#c3c6cd"/><stop offset="1" stop-color="#b9bcc3"/></linearGradient><linearGradient id="sg15" gradientUnits="userSpaceOnUse" x1="1150" y1="730" x2="1260" y2="715"><stop offset="0" stop-color="#e3f0df"/><stop offset="1" stop-color="#edf9e9"/></linearGradient><linearGradient id="sg16" gradientUnits="userSpaceOnUse" x1="1131" y1="715" x2="1195" y2="665"><stop offset="0" stop-color="#a4a4a4"/><stop offset="1" stop-color="#8e8e8e"/></linearGradient><linearGradient id="sg17" gradientUnits="userSpaceOnUse" x1="925" y1="700" x2="1131" y2="730"><stop offset="0" stop-color="#dedede"/><stop offset="1" stop-color="#d4d4d4"/></linearGradient><linearGradient id="sg18" gradientUnits="userSpaceOnUse" x1="1274.5" y1="806.8" x2="1305" y2="846.8"><stop offset="0" stop-color="#aeb1b7"/><stop offset="1" stop-color="#c0c3c9"/></linearGradient><linearGradient id="sg19" gradientUnits="userSpaceOnUse" x1="1218.4" y1="850.8" x2="1247.7" y2="890.8"><stop offset="0" stop-color="#aeb1b7"/><stop offset="1" stop-color="#c0c3c9"/></linearGradient><linearGradient id="sg20" gradientUnits="userSpaceOnUse" x1="1098.2" y1="941" x2="1126.4" y2="981"><stop offset="0" stop-color="#aeb1b7"/><stop offset="1" stop-color="#c0c3c9"/></linearGradient></defs>
<polygon points="1000.1,115.2 1034.0,90.0 1187.0,90.0 1142.6,122.0 1126.1,122.0 1115.5,131.7" fill="url(#sg1)" stroke="#2b2b2b" stroke-width="0.7" stroke-linejoin="round"/>
<polygon points="1142.6,122.0 1178.5,96.2 1200.8,96.2 1210.0,280.0 1218.2,467.0 1151.3,516.5 1140.0,516.0 1140.0,122.0" fill="url(#sg2)" stroke="#2b2b2b" stroke-width="0.7" stroke-linejoin="round"/>
<polygon points="1151.3,516.5 1218.2,467.0 1290.7,587.9 1223.3,637.9" fill="url(#sg3)" stroke="#2b2b2b" stroke-width="0.7" stroke-linejoin="round"/>
<polygon points="1223.3,637.9 1290.7,587.9 1294.2,668.1 1297.7,743.0 1299.6,791.3 1274.5,871.0 1212.3,921.0 1152.5,961.8 1098.0,1003.0 1094.3,893.1 1150.0,760.0 1225.6,685.6" fill="url(#sg4)" stroke="#2b2b2b" stroke-width="0.7" stroke-linejoin="round"/>
<polyline points="1262.8,690.2 1294.2,668.1" fill="none" stroke="#2b2b2b" stroke-width="0.7"/>
<polygon points="1006.9,530.0 958.5,605.7 960.8,700.0 1226.0,700.0 1223.3,637.9 1151.3,516.5 1100.0,500.0" fill="url(#cfl)" stroke="#2b2b2b" stroke-width="0.7" stroke-linejoin="round"/>
<polygon points="1006.9,530.0 958.5,605.7 960.8,700.0 1226.0,700.0 1223.3,637.9 1151.3,516.5 1100.0,500.0" fill="url(#cfl2)"/>
<polygon points="1006.9,470.0 1105.4,442.4 1129.0,444.8 1135.8,584.8 1009.8,568.9" fill="url(#sg5)" stroke="#2b2b2b" stroke-width="0.7" stroke-linejoin="round"/>
<polygon points="1129.0,444.8 1146.0,436.0 1151.3,570.8 1135.8,584.8" fill="#73777d" stroke="#2b2b2b" stroke-width="0.7" stroke-linejoin="round"/>
<polyline points="1145.8,437.0 1150.2,480.0" fill="none" stroke="#c8ccd2" stroke-width="0.8"/>
<polygon points="917.4,185.6 970.1,145.2 969.1,119.1 988.5,104.5 999.6,106.5 987.5,115.2 1115.5,131.7 1126.1,122.0 1186.2,129.7 1165.5,145.2 1116.4,139.4 1028.6,205.9 917.4,191.8" fill="url(#sg6)" stroke="#2b2b2b" stroke-width="0.7" stroke-linejoin="round"/>
<polygon points="969.1,119.1 980.2,138.5 970.1,145.2" fill="#cbc2b2" stroke="#2b2b2b" stroke-width="0.7" stroke-linejoin="round"/>
<polygon points="987.5,115.2 999.6,106.5 999.6,114.8 995.0,116.2" fill="#8a8272" stroke="#2b2b2b" stroke-width="0.7" stroke-linejoin="round"/>
<polyline points="1000.0,116.6 1115.0,132.2" fill="none" stroke="#f2f2f2" stroke-width="1.2"/>
<polygon points="917.4,191.8 1028.6,205.9 1038.9,415.3 1039.5,463.2 921.2,449.6" fill="url(#sg7)" stroke="#2b2b2b" stroke-width="0.7" stroke-linejoin="round"/>
<polygon points="921.2,449.6 1039.5,463.2 1039.8,489.0 917.7,474.6" fill="#fffef0" stroke="#2b2b2b" stroke-width="0.7" stroke-linejoin="round"/>
<polygon points="917.7,474.6 1039.8,489.0 1039.8,491.2 917.6,476.6" fill="#cfc7b7" stroke="#2b2b2b" stroke-width="0.4" stroke-linejoin="round"/>
<polygon points="1028.6,205.9 1116.4,139.4 1126.7,350.8 1038.9,415.3" fill="url(#sg8)" stroke="#2b2b2b" stroke-width="0.7" stroke-linejoin="round"/>
<polygon points="1038.9,415.3 1126.7,350.8 1148.8,353.7 1153.3,430.2 1134.9,444.8 1112.6,435.1 1039.8,491.0" fill="url(#sg9)" stroke="#2b2b2b" stroke-width="0.7" stroke-linejoin="round"/>
<polygon points="1112.6,435.1 1134.9,444.8 1129.0,444.8 1105.4,442.4" fill="#918a7e" stroke="#2b2b2b" stroke-width="0.7" stroke-linejoin="round"/>
<polygon points="1116.4,139.4 1165.5,145.2 1175.6,356.0 1126.7,350.8" fill="url(#sg10)" stroke="#2b2b2b" stroke-width="0.7" stroke-linejoin="round"/>
<polygon points="1165.5,145.2 1186.2,129.7 1197.3,340.5 1175.6,356.0" fill="#827c73" stroke="#2b2b2b" stroke-width="0.7" stroke-linejoin="round"/>
<polygon points="917.4,424.0 921.0,426.0 921.7,449.0 917.4,451.0" fill="#6a6a70"/>
<path d="M970 483L1016.600 489.500L1016.600 493.500Q1011 500.500 994 499.500Q976 498 970 489.500z" fill="url(#spn)" stroke="#8a8a8a" stroke-width=".5"/>
<path d="M983 500v25a11.800 4.500 0 0 0 23.500 0v-25z" fill="rgba(205,205,208,.55)"/>
<g stroke="#6a6a6a" stroke-width=".7" fill="none"><ellipse cx="994.8" cy="514" rx="11.5" ry="4"/><ellipse cx="994.8" cy="503" rx="11.5" ry="3.5"/><path d="M983.3 503v22M1006.300 503v22M989 506v20M1000.500 506v20"/></g>
<ellipse cx="994.700" cy="527.200" rx="11.800" ry="4.600" fill="none" stroke="#d9a84a" stroke-width="1.600"/><circle cx="995.300" cy="528.200" r="2.800" fill="#fff" stroke="#333" stroke-width=".7"/>
<polygon points="1061.3,873.7 1198.9,776.8 1235.0,752.0 1240.0,756.0 1068.1,875.6" fill="#cfd2d8" stroke="#2b2b2b" stroke-width="0.7" stroke-linejoin="round"/>
<polygon points="1068.1,875.6 1240.0,756.0 1250.0,766.0 1068.1,888.2" fill="#777a80" stroke="#2b2b2b" stroke-width="0.7" stroke-linejoin="round"/>
<polygon points="1068.1,888.2 1244.8,769.6 1307.9,722.4 1306.5,733.9 1296.6,741.4 1094.3,893.1 1068.1,911.5" fill="#73777d" stroke="#2b2b2b" stroke-width="0.7" stroke-linejoin="round"/>
<polygon points="917.4,877.0 1054.5,894.0 1061.3,889.2 1061.3,873.7 1068.1,875.6 1068.1,911.5 917.4,894.4" fill="url(#sg11)" stroke="#2b2b2b" stroke-width="0.7" stroke-linejoin="round"/>
<polygon points="917.4,894.4 1068.1,911.5 1094.3,893.1 1096.2,940.0 1098.0,1003.0 1048.0,996.6 917.4,981.0" fill="url(#sg12)" stroke="#2b2b2b" stroke-width="0.7" stroke-linejoin="round"/>
<polygon points="917.4,754.9 999.2,753.9 1125.2,785.9 1051.5,841.1 925.5,810.1 917.4,810.1" fill="url(#sg13)" stroke="#2b2b2b" stroke-width="0.7" stroke-linejoin="round"/>
<polyline points="999.2,753.9 925.5,810.1" fill="none" stroke="#2b2b2b" stroke-width="0.7"/>
<polygon points="917.4,810.1 925.5,810.1 1051.5,841.1 1053.4,892.5 917.4,877.0" fill="url(#sg14)" stroke="#2b2b2b" stroke-width="0.7" stroke-linejoin="round"/>
<polygon points="1051.5,841.1 1125.2,785.9 1128.5,828.6 1061.3,873.7 1061.3,889.2 1054.5,894.0 1053.4,892.5" fill="#74777d" stroke="#2b2b2b" stroke-width="0.7" stroke-linejoin="round"/>
<polygon points="917.4,650.0 1226.0,690.0 1262.8,690.2 1244.2,769.3 917.4,731.6" fill="#bcc8ba"/>
<polygon points="917.4,731.6 1244.2,769.3 1233.8,769.0 1226.0,774.0 1152.4,777.8 1152.4,804.9 1133.0,802.0 1129.0,781.0 1001.0,749.0 917.4,749.0" fill="#bcc8ba" stroke="#2b2b2b" stroke-width="0.7" stroke-linejoin="round"/>
<polygon points="1152.4,777.8 1226.0,774.0 1152.4,804.9" fill="#b3bfb1" stroke="#5f6b5d" stroke-width="0.5" stroke-linejoin="round"/>
<polygon points="1128.2,804.0 1148.5,806.8 1128.2,822.3" fill="#9eaa9c" stroke="#5f6b5d" stroke-width="0.5" stroke-linejoin="round"/>
<polygon points="917.4,749.0 1001.0,749.0 1129.0,781.0 1131.0,824.0 1125.2,785.9 999.2,753.9 917.4,754.9" fill="#b9c9b4" stroke="#6f806b" stroke-width="0.5" stroke-linejoin="round"/>
<polyline points="917.4,751.0 1000.5,750.8 1127.5,782.8" fill="none" stroke="#8fa28a" stroke-width="0.6"/>
<polyline points="917.4,753.0 1000.0,752.5 1126.3,784.5" fill="none" stroke="#dfead9" stroke-width="0.6"/>
<polygon points="917.4,650.0 957.5,655.2 924.5,682.4 917.4,687.0" fill="#dfe9dd" stroke="#2b2b2b" stroke-width="0.7" stroke-linejoin="round"/>
<polygon points="1174.7,697.0 1206.6,683.6 1306.5,696.6 1273.3,710.9" fill="#dce8d8" stroke="#2b2b2b" stroke-width="0.7" stroke-linejoin="round"/>
<polygon points="1143.8,731.3 1174.7,697.0 1273.3,710.9 1241.9,744.9" fill="url(#sg15)" stroke="#2b2b2b" stroke-width="0.7" stroke-linejoin="round"/>
<polygon points="1143.8,731.3 1241.9,744.9 1244.8,769.6 1144.4,757.4" fill="#ccd7ca" stroke="#2b2b2b" stroke-width="0.7" stroke-linejoin="round"/>
<polygon points="1241.9,744.9 1273.3,710.9 1306.5,696.6 1307.9,722.4 1244.8,769.6" fill="#848c82" stroke="#4f5a4d" stroke-width="0.7" stroke-linejoin="round"/>
<polygon points="1087.4,633.0 1145.5,637.8 1156.5,648.0 1156.5,653.0 1087.4,645.0" fill="#dfe2e7" stroke="#555" stroke-width="0.5" stroke-linejoin="round"/>
<polygon points="1132.2,729.0 1164.8,694.7 1195.6,681.9 1206.6,683.6 1174.7,697.0 1143.8,731.3" fill="#f4f4f4" stroke="#2b2b2b" stroke-width="0.7" stroke-linejoin="round"/>
<polyline points="1164.8,694.7 1174.7,697.0" fill="none" stroke="#777" stroke-width="0.5"/>
<polygon points="1132.2,729.0 1143.8,731.3 1144.4,757.4 1131.0,749.3" fill="#e6e6e6" stroke="#2b2b2b" stroke-width="0.7" stroke-linejoin="round"/>
<polygon points="917.4,724.0 926.5,724.8 1131.0,749.0 1144.5,757.8 917.4,731.6" fill="#e2e2e2" stroke="#2b2b2b" stroke-width="0.7" stroke-linejoin="round"/>
<polygon points="1129.3,706.9 1195.0,657.4 1195.6,680.7 1131.6,727.8" fill="url(#sg16)" stroke="#2b2b2b" stroke-width="0.7" stroke-linejoin="round"/>
<polygon points="924.5,682.4 987.5,632.0 1195.0,657.4 1129.3,706.9" fill="#f4f4f4" stroke="#2b2b2b" stroke-width="0.7" stroke-linejoin="round"/>
<polygon points="978.8,637.8 1182.8,665.0 1180.5,666.8 976.5,639.6" fill="#a6a6a6" stroke="#3a3a3a" stroke-width="0.6" stroke-linejoin="round"/>
<polygon points="1182.8,665.0 1180.5,666.8 1180.5,673.6 1179.1,674.7 1179.1,679.6 1184.4,675.6 1184.4,670.8 1182.8,672.0" fill="#e9e9e9" stroke="#333" stroke-width="0.6" stroke-linejoin="round"/>
<polygon points="957.5,655.2 1161.9,681.3 1159.6,683.1 955.2,657.0" fill="#a6a6a6" stroke="#3a3a3a" stroke-width="0.6" stroke-linejoin="round"/>
<polygon points="1161.9,681.3 1159.6,683.1 1159.6,689.9 1158.2,691.0 1158.2,695.9 1163.5,691.9 1163.5,687.1 1161.9,688.3" fill="#e9e9e9" stroke="#333" stroke-width="0.6" stroke-linejoin="round"/>
<polygon points="937.0,671.7 1140.9,697.6 1138.6,699.4 934.7,673.5" fill="#a6a6a6" stroke="#3a3a3a" stroke-width="0.6" stroke-linejoin="round"/>
<polygon points="1140.9,697.6 1138.6,699.4 1138.6,706.2 1137.2,707.3 1137.2,712.2 1142.5,708.2 1142.5,703.4 1140.9,704.6" fill="#e9e9e9" stroke="#333" stroke-width="0.6" stroke-linejoin="round"/>
<polygon points="924.5,682.4 1131.0,707.6 1131.0,749.3 926.5,725.0" fill="url(#sg17)" stroke="#2b2b2b" stroke-width="0.7" stroke-linejoin="round"/>
<polygon points="917.4,687.0 924.5,682.4 926.5,725.0 917.4,724.0" fill="#c9c9c9" stroke="#2b2b2b" stroke-width="0.7" stroke-linejoin="round"/>
<path d="M1058 667.500a13.600 6.300 0 0 0 27.200 0v4a13.600 6.300 0 0 1-27.200 0z" fill="#5a2f86" stroke="#3a1f55" stroke-width=".5"/><ellipse cx="1071.600" cy="667.500" rx="13.600" ry="6.300" fill="#7442a6" stroke="#3a1f55" stroke-width=".5"/>
<polygon points="1046.0,650.0 1085.3,635.5 1085.3,653.0 1052.8,672.9 1043.6,673.3" fill="#6a3a9a" stroke="#3a1f55" stroke-width="0.5" stroke-linejoin="round"/>
<polygon points="1052.8,672.9 1085.3,653.0 1085.3,660.7 1043.6,684.5 1043.6,673.3" fill="#4d2a72" stroke="#2a1540" stroke-width="0.5" stroke-linejoin="round"/>
<polygon points="1020.8,668.0 1043.6,673.3 1043.6,684.5 1020.8,680.1" fill="#7b4aa5" stroke="#3a1f55" stroke-width="0.5" stroke-linejoin="round"/>
<polygon points="1020.8,660.3 1043.1,662.7 1050.4,664.6 1052.8,667.5 1045.5,672.5 1017.9,667.5" fill="#d9452a" stroke="#7a1f10" stroke-width="0.5" stroke-linejoin="round"/>
<polygon points="1048.4,648.1 1050.4,664.6 1043.1,662.7 1046.5,655.0" fill="#c8401f" stroke="#7a1f10" stroke-width="0.4" stroke-linejoin="round"/>
<polygon points="1025.2,652.0 1046.5,655.0 1043.1,662.7 1020.8,660.3" fill="#ff7a5a" stroke="#a03018" stroke-width="0.4" stroke-linejoin="round"/>
<polygon points="1027.1,646.2 1048.4,648.1 1046.5,655.0 1025.2,652.0" fill="#e0482c" stroke="#7a1f10" stroke-width="0.4" stroke-linejoin="round"/>
<polyline points="1026.6,648.0 1047.9,650.2" fill="none" stroke="#9a2a14" stroke-width="0.4"/>
<polyline points="1026.0,650.0 1047.2,652.5" fill="none" stroke="#9a2a14" stroke-width="0.4"/>
<polygon points="1021.0,640.0 1030.0,644.0 1030.0,648.0 1022.0,647.0" fill="#cfcfcf" stroke="#888" stroke-width="0.4" stroke-linejoin="round"/>
<path d="M1014.500 629.700L1017.900 633.100L1046.500 637.500Q1062 637 1077.500 632.600Q1086 628 1089.100 622.900L1089.100 631.700Q1086 637.500 1080.400 641.400Q1064 647.500 1046.500 647.700L1017.900 642.800L1014.500 638.400z" fill="#bcbcbc" stroke="#555" stroke-width=".6" stroke-linejoin="round"/>
<polyline points="1017.9,633.1 1017.9,642.8" fill="none" stroke="#8a8a8a" stroke-width="0.5"/>
<polyline points="1046.5,637.5 1046.5,647.7" fill="none" stroke="#8a8a8a" stroke-width="0.5"/>
<path d="M1014.500 629.700L1037.300 611.300L1085.300 618.100Q1089.100 619.500 1089.100 622.900Q1086 628 1077.500 632.600Q1062 637 1046.500 637.500L1017.900 633.100z" fill="#dadada" stroke="#555" stroke-width=".6" stroke-linejoin="round"/>
<g fill="#4a4a4a"><ellipse cx="1029.100" cy="627.300" rx="2.700" ry="1.500"/><ellipse cx="1037.300" cy="628.300" rx="2.700" ry="1.500"/><ellipse cx="1045.100" cy="629.200" rx="2.700" ry="1.500"/><ellipse cx="1045.300" cy="622.900" rx="3" ry="1.700"/></g>
<text x="1060" y="647.200" font-family="Liberation Sans,sans-serif" font-size="12" fill="#3a4f7a" opacity=".9" textLength="20.500" lengthAdjust="spacingAndGlyphs">G54</text>
<polyline points="936.0,610.0 1042.6,623.4" fill="none" stroke="#222" stroke-width="0.8"/>
<polyline points="1052.0,623.0 1107.7,583.4" fill="none" stroke="#222" stroke-width="0.8"/>
<polygon points="917.4,607.8 936.0,609.2 934.5,613.5" fill="#f0282d"/>
<circle cx="1107.700" cy="583.600" r="1.800" fill="#1aa84a"/>
<polyline points="1050.4,622.0 1050.4,606.0" fill="none" stroke="#5a7be0" stroke-width="2.3"/>
<polygon points="1047.0,608.5 1053.8,608.5 1050.4,597.5" fill="#5a7be0"/>
<polyline points="1053.0,623.5 1060.0,618.0" fill="none" stroke="#1aa84a" stroke-width="3.2"/>
<polygon points="1056.5,615.5 1064.0,614.5 1062.5,621.0" fill="#1aa84a"/>
<polyline points="1055.0,624.8 1069.0,627.0" fill="none" stroke="#f0383d" stroke-width="2.3"/>
<polygon points="1068.0,623.6 1078.0,628.3 1067.3,631.0" fill="#f0383d"/>
<circle cx="1051.400" cy="624.900" r="4.600" fill="#fff" stroke="#111" stroke-width=".6"/><path d="M1051.400 624.900v-4.600a4.600 4.600 0 0 1 4.600 4.600zM1051.400 624.900v4.600a4.600 4.600 0 0 1-4.600-4.600z" fill="#111"/>
<polygon points="1274.5,806.8 1305.0,839.8 1307.5,889.3 1274.5,884.5" fill="url(#sg18)" stroke="#2b2b2b" stroke-width="0.7" stroke-linejoin="round"/>
<polygon points="1305.0,839.8 1329.4,823.4 1331.9,871.5 1307.5,889.3" fill="#70747a" stroke="#2b2b2b" stroke-width="0.7" stroke-linejoin="round"/>
<polygon points="1274.5,806.8 1300.1,791.0 1329.4,823.4 1305.0,839.8" fill="#a9acb2" stroke="#2b2b2b" stroke-width="0.7" stroke-linejoin="round"/>
<polygon points="1218.4,850.8 1247.7,881.3 1251.3,931.3 1212.8,926.5 1212.8,920.3 1221.0,912.5" fill="url(#sg19)" stroke="#2b2b2b" stroke-width="0.7" stroke-linejoin="round"/>
<polygon points="1247.7,881.3 1272.1,864.2 1275.3,913.0 1251.3,931.3" fill="#70747a" stroke="#2b2b2b" stroke-width="0.7" stroke-linejoin="round"/>
<polygon points="1218.4,850.8 1242.8,833.7 1272.1,864.2 1247.7,881.3" fill="#a9acb2" stroke="#2b2b2b" stroke-width="0.7" stroke-linejoin="round"/>
<polygon points="1098.2,941.0 1126.4,974.0 1129.3,1021.6 1098.2,1017.0" fill="url(#sg20)" stroke="#2b2b2b" stroke-width="0.7" stroke-linejoin="round"/>
<polygon points="1126.4,974.0 1150.8,957.0 1153.2,1003.3 1129.3,1021.6" fill="#70747a" stroke="#2b2b2b" stroke-width="0.7" stroke-linejoin="round"/>
<polygon points="1098.2,941.0 1120.7,924.5 1150.8,957.0 1126.4,974.0" fill="#a9acb2" stroke="#2b2b2b" stroke-width="0.7" stroke-linejoin="round"/>
<g stroke="#9a9a9a" stroke-width=".7" stroke-linejoin="round"><polygon points="943.400,936.500 989,941.200 990,988.300 944.300,983.800" fill="rgba(200,201,205,.82)"/><polygon points="943.400,936.500 964,919.800 1010.200,924.300 989,941.200" fill="rgba(205,206,210,.82)"/><polygon points="989,941.200 1010.200,924.300 1012,973.500 990,988.300" fill="rgba(190,191,196,.82)"/></g>
<text transform="translate(945.800 965.500) rotate(5.500)" font-family="Liberation Sans,sans-serif" font-size="13" fill="#2a2a2a" textLength="41" lengthAdjust="spacingAndGlyphs">Спереди</text>
<text transform="translate(994 966.500) rotate(-34) skewX(-12)" font-family="Liberation Sans,sans-serif" font-size="8" fill="#333" textLength="19" lengthAdjust="spacingAndGlyphs">Справа</text>
<text transform="translate(964 928.500) rotate(6) skewX(-50) scale(1 .55)" font-family="Liberation Sans,sans-serif" font-size="8.500" fill="#333">Сверху</text>
<polyline points="944.2,983.8 976.3,959.5" fill="none" stroke="#5fc49a" stroke-width="1.2"/>
<polyline points="944.2,983.8 941.6,928.0" fill="none" stroke="#2038d8" stroke-width="2.2"/>
<polyline points="944.2,983.8 997.8,990.8" fill="none" stroke="#d8184a" stroke-width="2.6"/>
<text x="937.600" y="923.500" font-family="Liberation Sans,sans-serif" font-size="11.500" fill="#2a6df0">Z</text>
<text x="1005.800" y="999.500" font-family="Liberation Sans,sans-serif" font-size="11.500" fill="#d8184a">X</text>
<text x="972.500" y="967.500" font-family="Liberation Sans,sans-serif" font-size="9" fill="#5fc49a">Y</text>
</svg>
<div class="abs" style="left:1033px;top:59.5px;width:720px;height:36.5px;background:#f5f6f8;border-radius:8px;box-shadow:0 0 1.5px rgba(0,0,0,.18)"></div>
<div class="abs" style="left:1870px;top:56px;width:38px;height:38px;background:#f4f5f7;border-radius:19px"></div>
<div class="abs" style="left:1870px;top:102.5px;width:38px;height:153px;background:#f4f5f7;border-radius:19px"></div>
<div class="abs" style="left:1870px;top:263.5px;width:38px;height:533px;background:#f4f5f7;border-radius:19px"></div>
<div class="abs" style="left:1037px;top:997px;width:90px;height:30px;background:#f5f6f8;border-radius:6px"></div>
<svg class="abs" style="left:917px;top:40px" width="1003" height="992" viewBox="917 40 1003 992" fill="none">
<path d="M1044 71.6h16M1044 74.5h16M1044 77.4h16M1044 80.3h16" stroke="#2d3658" stroke-width="1.1"/><path d="M1044 84h16" stroke="#2d3658" stroke-width="2"/>
<path d="M1084 71.6h10M1084 74.5h10M1084 77.4h10M1084 80.3h10" stroke="#8a90a5" stroke-width="1"/><path d="M1078 84h16" stroke="#2d3658" stroke-width="2"/><path d="M1080.6 70.6v9M1078 77.4l2.600 2.800l2.600-2.800" stroke="#8a90a5" stroke-width="1.2"/>
<path d="M1112 72h16" stroke="#2d3658" stroke-width="2"/><path d="M1112 75.800h16M1112 78.700h16M1112 81.600h16M1112 84.500h16" stroke="#8a90a5" stroke-width="1"/>
<path d="M1151 72.500h2v-1.500h3v1.500h2v3h1.500v3h-1.500v3h-2v1.500h-3v-1.500h-2v-3h-1.500v-3h1.500z" transform="translate(-0.5 0.500)" fill="#dcdde2" stroke="#8a90a5" stroke-width=".9"/><path d="M1146.200 73.800v-3.300h3.300M1158.500 70.500h3.300v3.300M1161.800 82.200v3.300h-3.300M1149.500 85.500h-3.300v-3.300" stroke="#2d3658" stroke-width="1.2"/>
<path d="M1197.800 71h4.400v6.800h4l-6.200 6.800l-6.200-6.800h4z" fill="#70778c"/>
<path d="M1231.800 84.600h4.400v-6.800h4l-6.200-6.800l-6.200 6.800h4z" fill="#70778c"/>
<circle cx="1267.800" cy="77.900" r="8" fill="#f7c244"/><path d="M1267.800 73v6" stroke="#2b2d33" stroke-width="1.800"/><circle cx="1267.800" cy="82" r="1.100" fill="#2b2d33"/>
<rect x="1294.400" y="70.600" width="15.600" height="15" rx="1" fill="#8a90a5"/><path d="M1294.400 71.600a1 1 0 0 1 1-1h13.600a1 1 0 0 1 1 1v6.400h-15.600z" fill="#2d3658"/><path d="M1296.500 80.500h5.500M1296.500 83h5.500" stroke="#f5f6f8" stroke-width="1"/><circle cx="1306" cy="81.800" r="2.300" fill="#2d3658" stroke="#f5f6f8" stroke-width=".6"/>
<rect x="1328" y="71" width="15" height="13" fill="#dfe0e5"/><path d="M1327 74l4 4l3.500-4l4 4l3.500-4M1328 78l3 -3.500l3.500 3.500l3.500-3.500l3.500 3.500" stroke="#8a90a5" stroke-width=".9"/><path d="M1326.500 76l5.500 6.500l4.500-5l5 6l3.500-4" stroke="#2d3658" stroke-width="1.200"/>
<path d="M1368.37 70.36 L1371.63 70.36 L1371.92 72.61 L1372.74 72.95 L1374.53 71.57 L1376.83 73.87 L1375.45 75.66 L1375.79 76.48 L1378.04 76.77 L1378.04 80.03 L1375.79 80.32 L1375.45 81.14 L1376.83 82.93 L1374.53 85.23 L1372.74 83.85 L1371.92 84.19 L1371.63 86.44 L1368.37 86.44 L1368.08 84.19 L1367.26 83.85 L1365.47 85.23 L1363.17 82.93 L1364.55 81.14 L1364.21 80.32 L1361.96 80.03 L1361.96 76.77 L1364.21 76.48 L1364.55 75.66 L1363.17 73.87 L1365.47 71.57 L1367.26 72.95 L1368.08 72.61z" fill="#2d3658" stroke="#2d3658" stroke-width=".8" stroke-linejoin="round"/><circle cx="1370" cy="78.4" r="2.7" fill="#f5f6f8"/>
<rect x="1409" y="71" width="14.200" height="14.200" rx=".6" fill="#ff5a5f"/>
<path d="M1444.900 72v12" stroke="#2d3658" stroke-width="1.800"/><path d="M1456 72.400v11.200l-8.400-5.600z" fill="#2d3658"/>
<path d="M1479 70.400l11.800 7.700l-11.800 7.700z" fill="#2d3658"/>
<path d="M1523.400 72v12" stroke="#2d3658" stroke-width="1.800"/><path d="M1512 72.400v11.200l8.400-5.600z" fill="#2d3658"/>
<path d="M1548 78.500h126" stroke="#2d3658" stroke-width="3.200" stroke-linecap="round"/><path d="M1674 78.500h30" stroke="#c9cbd3" stroke-width="1"/><circle cx="1674.300" cy="78.500" r="5.600" fill="#2d3658"/>
<g fill="#2d3658"><circle cx="1728.800" cy="73.300" r="2.200"/><circle cx="1739" cy="73.300" r="2.200"/><circle cx="1728.800" cy="83.500" r="2.200"/><circle cx="1739" cy="83.500" r="2.200"/></g>
<path d="M1883.8 77.800l5.200-6l5.200 6z" fill="#e6e7ea" stroke="#2a2d3a" stroke-width="1.200" stroke-linejoin="round"/>
<g transform="translate(1889.5 121.500) rotate(45)"><path d="M-6.500 -6.500v6.500a6.500 6.500 0 0 0 13 0v-6.500h-4.200v6.500a2.300 2.300 0 0 1-4.600 0v-6.500z" fill="#2d3658"/><rect x="-6.500" y="-6.500" width="4.200" height="5" fill="#b8bcc8"/><rect x="2.300" y="-6.500" width="4.200" height="3" fill="#2d3658"/><path d="M-6.5 -1.500a6.500 6.500 0 0 0 1 5l3.600-2.200a2.300 2.300 0 0 1-0.400-1.300v-1.500z" fill="#b8bcc8"/></g>
<path d="M1881 166v-8a6.500 6.500 0 0 1 13 0v8z" fill="#b8bcc8"/><circle cx="1887.5" cy="158" r="3.300" fill="#f4f5f7" stroke="#2d3658" stroke-width="1"/><path d="M1881 166v-3.500h3.500a3.500 3.500 0 0 1 3.500 3.500z" fill="#d5d7de"/><circle cx="1891.5" cy="163.500" r=".9" fill="#2d3658"/><path d="M1895.5 163.500v2.500M1897.5 163.500v3.500" stroke="#2d3658" stroke-width="1"/>
<path d="M1884.5 190.500c-3 2-3 12 0 14.500v-6h2v-3h-2z" fill="#2d3658"/><path d="M1890.5 190.500c3 0.500 5 4 5.500 6.500h-5.500z" fill="#2d3658"/><rect x="1885.5" y="195.500" width="12" height="4" fill="#b8bcc8"/><path d="M1890.5 199.500v5.500c2-1 3-3 3.500-5.500z" fill="#2d3658"/><path d="M1894 196h3.500v3h-3.500z" fill="#2d3658"/><circle cx="1888" cy="192.500" r="1.100" fill="#2d3658"/>
<defs><linearGradient id="gg" x1="0" y1="0" x2="0" y2="1"><stop offset="0" stop-color="#14a14e"/><stop offset="1" stop-color="#e2d41c"/></linearGradient><linearGradient id="gs" x1="0" y1="0" x2="1" y2="0"><stop offset="0" stop-color="#b9c4d8"/><stop offset=".5" stop-color="#eef1f6"/><stop offset="1" stop-color="#b9c0d0"/></linearGradient><linearGradient id="gb" x1="0" y1="0" x2="1" y2="0"><stop offset="0" stop-color="#3d8be0"/><stop offset=".5" stop-color="#7db4f0"/><stop offset="1" stop-color="#3d8be0"/></linearGradient><radialGradient id="gsp" cx=".4" cy=".35" r=".7"><stop offset="0" stop-color="#f2f5fa"/><stop offset=".6" stop-color="#aeb9cc"/><stop offset="1" stop-color="#7f8aa3"/></radialGradient></defs>
<rect x="1884" y="230" width="10.200" height="8.400" fill="url(#gg)"/><path d="M1886 228.700h6" stroke="#14a18e" stroke-width="1"/><path d="M1882 239.800h14" stroke="#b0b3bd" stroke-width="1.300"/><path d="M1884 243h10" stroke="#2d3658" stroke-width="1.400"/>
<rect x="1884.5" y="274.7" width="9" height="9" rx="1" fill="#eef4fd" stroke="#6aa8f0" stroke-width="1"/><rect x="1884.5" y="287" width="9" height="4.200" rx=".8" fill="#eef4fd" stroke="#6aa8f0" stroke-width="1"/><rect x="1882" y="282.5" width="14" height="5" rx=".8" fill="#eef4fd" stroke="#6aa8f0" stroke-width="1"/>
<circle cx="1889" cy="317" r="15" fill="#d9dadd"/><rect x="1884.5" y="308.7" width="9" height="9" rx="1" fill="#c9cbd2" stroke="#5a607a" stroke-width="1"/><rect x="1884.5" y="321" width="9" height="4.200" rx=".8" fill="#c9cbd2" stroke="#5a607a" stroke-width="1"/><rect x="1882" y="316.5" width="14" height="5" rx=".8" fill="#c9cbd2" stroke="#5a607a" stroke-width="1"/>
<rect x="1882" y="343.200" width="14" height="15.600" fill="#fff" stroke="#2a2d3a" stroke-width="1"/>
<rect x="1884.5" y="376.7" width="9" height="9" rx="1" fill="#3d8be0" stroke="#1f3d6b" stroke-width="1"/><rect x="1884.5" y="389" width="9" height="4.200" rx=".8" fill="#3d8be0" stroke="#1f3d6b" stroke-width="1"/><rect x="1882" y="384.5" width="14" height="5" rx=".8" fill="#3d8be0" stroke="#1f3d6b" stroke-width="1"/>
<circle cx="1889" cy="419" r="15" fill="#d9dadd"/><path d="M1886 419.500h6l-1.300 7.500h-3.400z" fill="#f2c230" stroke="#2a2d3a" stroke-width=".9" stroke-linejoin="round"/><rect x="1885.5" y="410.800" width="7" height="3" fill="#fff" stroke="#2a2d3a" stroke-width=".9"/><rect x="1883.5" y="413.800" width="11" height="5.700" rx=".8" fill="#fff" stroke="#2a2d3a" stroke-width=".9"/>
<circle cx="1889" cy="453" r="15" fill="#d9dadd"/><path d="M1886.7 448.500h4.600v10l-2.300 2.500l-2.300-2.500z" fill="#f2c230" stroke="#2a2d3a" stroke-width=".8" stroke-linejoin="round"/><path d="M1886.7 453l4.600-2.500M1886.7 456.500l4.600-2.500M1886.7 459l4.600-2" stroke="#8a6500" stroke-width=".9"/><rect x="1886.7" y="444.500" width="4.600" height="2" fill="#fff" stroke="#2a2d3a" stroke-width=".8"/><rect x="1885.7" y="446.300" width="6.600" height="2.600" rx=".6" fill="#fff" stroke="#2a2d3a" stroke-width=".8"/>
<circle cx="1889" cy="487" r="15" fill="#d9dadd"/><path d="M1881.5 494.500v-8c0-3 2-5.500 5-6v14z" fill="#f7c838" stroke="#2a2d3a" stroke-width=".9" stroke-linejoin="round"/><path d="M1896.5 494.500v-8c0-3-2-5.500-5-6v14z" fill="#fff" stroke="#2a2d3a" stroke-width=".9" stroke-linejoin="round"/><path d="M1886.5 484h5v4h-5zM1886.5 490.500h5" fill="#fff" stroke="#2a2d3a" stroke-width=".9"/><circle cx="1889" cy="481.500" r="1.800" fill="#fff" stroke="#2a2d3a" stroke-width=".8"/>
<circle cx="1889" cy="521" r="15" fill="#d9dadd"/><path d="M1884 513.500h8.500a3 3 0 0 1 3 3v11.500h-12l-1.500-3v-1.500h7.500v-3h-4v1h-2.500v-4h1z" fill="#fff" stroke="#2a2d3a" stroke-width="1" stroke-linejoin="round"/>
<circle cx="1889" cy="555" r="15" fill="#d9dadd"/><g stroke="#4a5470" stroke-width="1.300" stroke-linecap="round"><path d="M1882.5 551.500l4-4M1882.5 556l8.500-8.500M1884 559l11-11M1888 560l7.500-7.500M1892 561l3.500-3.500"/></g>
<path d="M1873 579.500h32" stroke="#b4b8c8" stroke-width="1"/>
<circle cx="1889" cy="604" r="15" fill="#d9dadd"/><circle cx="1889" cy="604" r="4" fill="#3d8be0"/>
<circle cx="1889" cy="641.5" r="15" fill="#d9dadd"/><path d="M1881.5 646.500v-5.500a3.700 3.700 0 0 1 7.400 0v2.500a3.700 3.700 0 0 0 7.400 0v-5.500" stroke="#3a4260" stroke-width="1.300" fill="none"/>
<circle cx="1889" cy="675.6" r="15" fill="#d9dadd"/><path d="M1881 670.1q8-2.600 16 0v11.500q-8-2.600-16 0z" fill="url(#gb)" stroke="#1f2a44" stroke-width="1" stroke-linejoin="round"/>
<circle cx="1889" cy="709.7" r="15" fill="#d9dadd"/><path d="M1881 704.2q8-2.600 16 0v11.500q-8-2.600-16 0z" fill="url(#gs)" stroke="#6aa8f0" stroke-width="1" stroke-linejoin="round"/>
<circle cx="1889" cy="743.8" r="15" fill="#d9dadd"/><path d="M1881 738.3q8-2.600 16 0v11.500q-8-2.600-16 0z" fill="#cfdcf0" stroke="#6aa8f0" stroke-width="1"/><path d="M1889 737.0v11.500M1881 743.8q8-2.600 16 0" stroke="#6aa8f0" stroke-width="1" fill="none"/>
<circle cx="1889" cy="778" r="15" fill="#d9dadd"/><path d="M1881 772.5q8-2.600 16 0v11.500q-8-2.600-16 0z" fill="url(#gs)" stroke="#2a2d3a" stroke-width="1" stroke-linejoin="round"/><circle cx="1896" cy="784" r="2.600" fill="#2f86ea" stroke="#1f4f9a" stroke-width=".6"/>
<rect x="1047.600" y="1007.500" width="9" height="9" fill="#fff" stroke="#2a2d3a" stroke-width="1.400"/><path d="M1044.300 1008v-3.500h3.500M1056.300 1004.500h3.500v3.500M1059.800 1016v3.500h-3.500M1047.800 1019.500h-3.500v-3.500" stroke="#5b9cf0" stroke-width="1.200"/>
<circle cx="1082" cy="1012" r="8.400" fill="url(#gsp)" stroke="#2a2d3a" stroke-width="1.100"/><path d="M1073.600 1013q8.400 4 16.800 0M1084 1003.800q3 8.200 0 16.400" stroke="#3a4260" stroke-width=".8" fill="none"/>
<path d="M1103 1009.500l8.500-4.500l9 4v8.500l-8.500 4.500l-9-4z" fill="#fff" stroke="#2a2d3a" stroke-width="1" stroke-linejoin="round"/><path d="M1112 1013.500l8.500-4.500v8.500l-8.500 4.500z" fill="#d5dae6" stroke="#2a2d3a" stroke-width=".9" stroke-linejoin="round"/><path d="M1103 1009.500l9 4M1103 1017.500l8-4M1104 1013.500h7" stroke="#2a2d3a" stroke-width=".8"/>
<path d="M1662.800 1015.500h12.400M1669 1009.300v12.400" stroke="#3a3d4a" stroke-width="1.200"/>
<g stroke="#2a2d3a" stroke-width=".9" stroke-linecap="round"><path d="M1705 1008.500v8M1705 1016.500l-7 4.500M1705 1016.500l7 4.500"/></g><circle cx="1705" cy="1016.500" r="3.600" fill="#bfe3de" fill-opacity=".6" stroke="#2aa89a" stroke-width="1"/><path d="M1703.800 1009.500l1.200-1.800l1.200 1.800M1698 1019.300l-0.500 2l2 0M1712 1019.300l0.500 2l-2 0" stroke="#2a2d3a" stroke-width=".9" fill="none"/>
<path d="M1829 1019.500c1.500-1 1.800-2.500 1.800-5v-1.500a4.700 4.700 0 0 1 9.400 0v1.500c0 2.500 0.300 4 1.800 5z" stroke="#2a2d3a" stroke-width="1.200" stroke-linejoin="round"/><path d="M1833.500 1022h4" stroke="#2a2d3a" stroke-width="1.200" stroke-linecap="round"/>
<rect x="1901" y="1003" width="9" height="23" rx="1.500" fill="#cdd9ec" stroke="#2f7de1" stroke-width="1.800"/>
</svg>
<div class="t" style="left:1722px;top:1009px;font-size:13.2px;color:#2b3044;width:92px;overflow:hidden;-webkit-mask-image:linear-gradient(90deg,#000 86%,transparent 104%);mask-image:linear-gradient(90deg,#000 86%,transparent 104%)">Глобальная СК</div>
<div class="t" style="left:1867px;top:1009px;font-size:13.2px;color:#2b3044">0%</div>

</body>
</html>
